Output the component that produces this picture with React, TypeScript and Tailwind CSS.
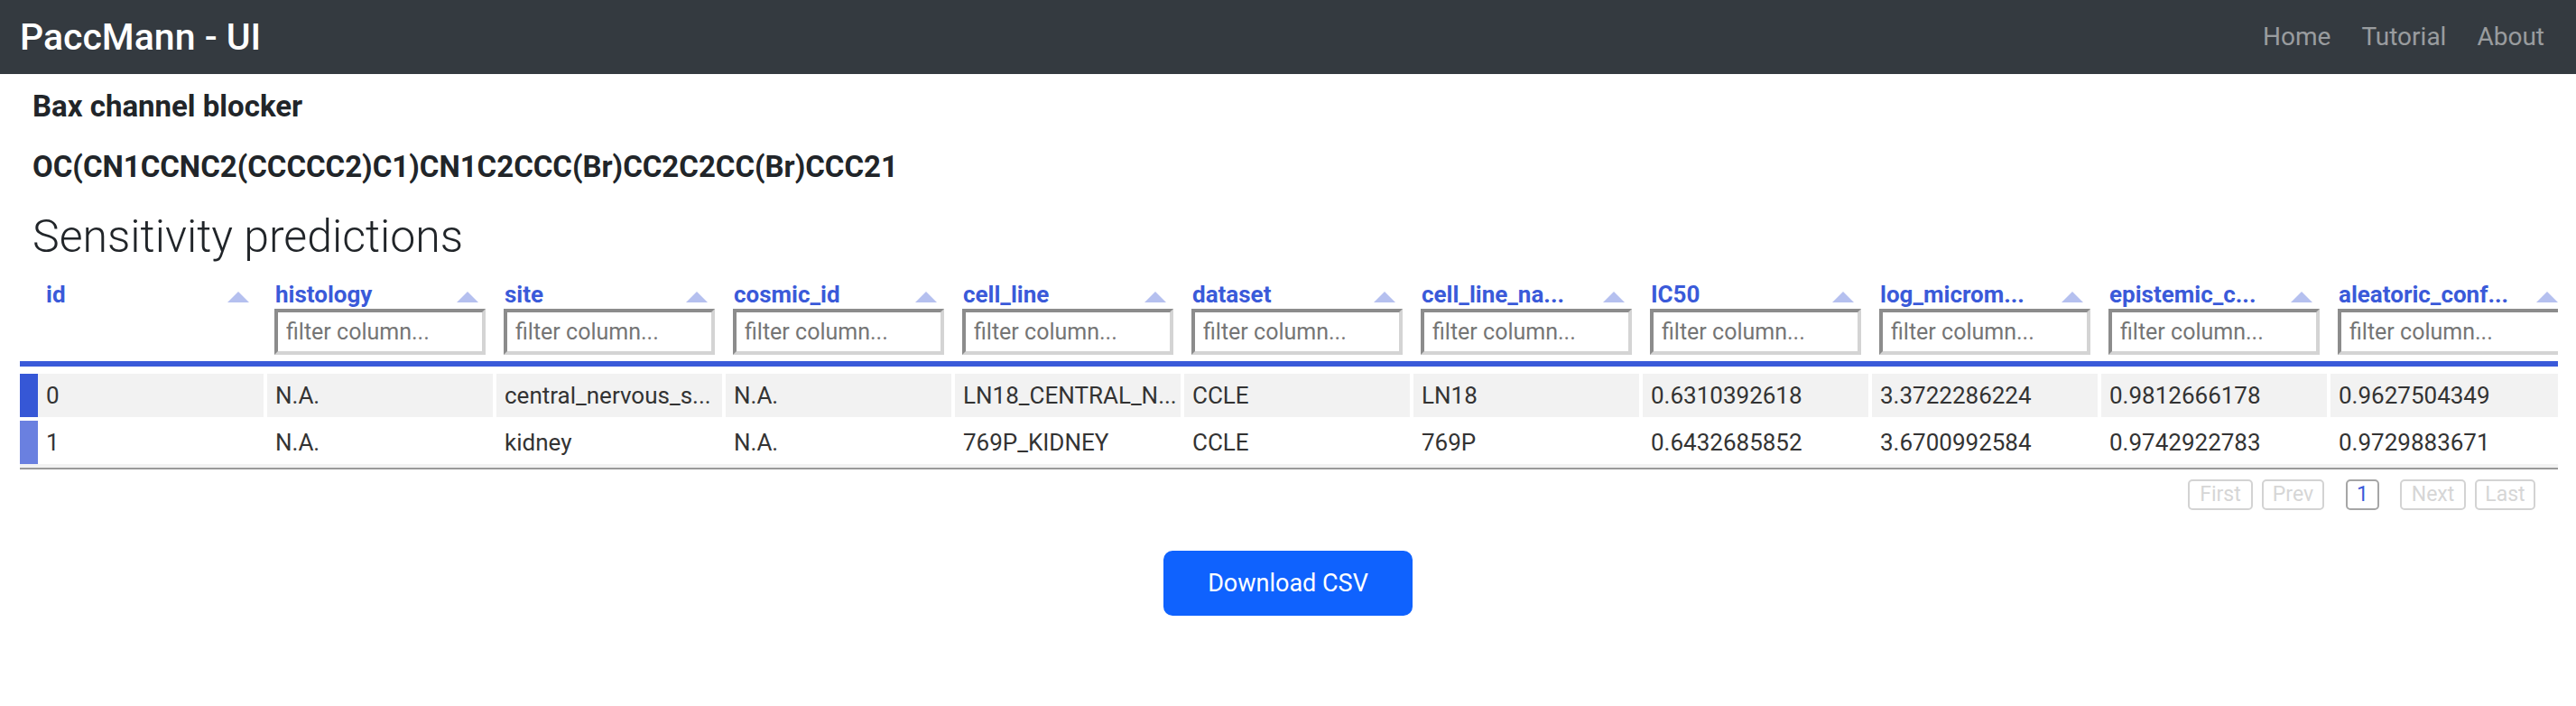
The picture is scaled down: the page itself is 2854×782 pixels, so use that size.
import React from "react";

const cols: { label: string; filter: boolean; last?: boolean }[] = [
  { label: "id", filter: false },
  { label: "histology", filter: true },
  { label: "site", filter: true },
  { label: "cosmic_id", filter: true },
  { label: "cell_line", filter: true },
  { label: "dataset", filter: true },
  { label: "cell_line_na...", filter: true },
  { label: "IC50", filter: true },
  { label: "log_microm...", filter: true },
  { label: "epistemic_c...", filter: true },
  { label: "aleatoric_conf...", filter: true, last: true },
];

const rows = [
  [
    "0",
    "N.A.",
    "central_nervous_s...",
    "N.A.",
    "LN18_CENTRAL_N...",
    "CCLE",
    "LN18",
    "0.6310392618",
    "3.3722286224",
    "0.9812666178",
    "0.9627504349",
  ],
  [
    "1",
    "N.A.",
    "kidney",
    "N.A.",
    "769P_KIDNEY",
    "CCLE",
    "769P",
    "0.6432685852",
    "3.6700992584",
    "0.9742922783",
    "0.9729883671",
  ],
];

function SortArrow() {
  return (
    <svg width="24" height="12" viewBox="0 0 24 12" className="shrink-0 mb-[7px] mr-[8px]">
      <polygon points="12,0 24,12 0,12" fill="#b5c0ef" />
    </svg>
  );
}

export default function App() {
  const font = { fontFamily: "Roboto, 'Noto Sans', sans-serif" };
  return (
    <div className="min-h-[782px] w-[2854px] bg-white text-[#212529]" style={font}>
      {/* Navbar */}
      <nav className="h-[82px] bg-[#343a40] flex items-center justify-between pl-[22px] pr-[35px]">
        <span className="text-white text-[41px] font-medium leading-none">PaccMann - UI</span>
        <div className="flex items-center gap-[34px] text-[28px] text-[rgba(255,255,255,0.5)]">
          <span>Home</span>
          <span>Tutorial</span>
          <span>About</span>
        </div>
      </nav>

      <main className="px-[22px]">
        <h5 className="pl-[14px] mt-[16px] text-[33px] font-bold leading-[40px]">Bax channel blocker</h5>
        <h5 className="pl-[14px] mt-[27px] text-[33px] font-bold leading-[40px]">
          OC(CN1CCNC2(CCCCC2)C1)CN1C2CCC(Br)CC2C2CC(Br)CCC21
        </h5>
        <h2 className="pl-[14px] mt-[28px] text-[50px] font-light leading-[58px]">Sensitivity predictions</h2>

        {/* Table */}
        <div className="mt-[19px] w-[2812px] overflow-hidden">
          {/* header */}
          <div className="flex gap-[4px] pl-[20px] pb-[7px]">
            {cols.map((c) => (
              <div
                key={c.label}
                className={`${c.last ? "w-[268px]" : "w-[250px]"} shrink-0 px-[8px]`}
              >
                <div className="flex items-end h-[32px]">
                  <span className="flex-1 min-w-0 truncate text-[26px] font-bold text-[#3a5ad9] leading-[32px] pl-[1px]">
                    {c.label}
                  </span>
                  <SortArrow />
                </div>
                <div className="h-[51px]">
                  {c.filter && (
                    <input
                      readOnly
                      placeholder="filter column..."
                      className="w-full h-[51px] border-[4px] border-solid border-t-[#8c8c8c] border-l-[#8c8c8c] border-b-[#d4d4d4] border-r-[#d4d4d4] pl-[9px] text-[25px] placeholder:text-[#757575] outline-none bg-white"
                      style={font}
                    />
                  )}
                </div>
              </div>
            ))}
          </div>
          <div className="h-[6px] bg-[#3a5ad9]" />

          {/* body */}
          <div className="mt-[8px]">
            {rows.map((r, ri) => (
              <div key={ri} className={`flex h-[48px] ${ri > 0 ? "mt-[4px]" : ""}`}>
                <div className={`w-[20px] shrink-0 ${ri === 0 ? "bg-[#3657d6]" : "bg-[#6a80e0]"}`} />
                <div className="flex gap-[4px]">
                  {r.map((v, ci) => (
                    <div
                      key={ci}
                      className={`${ci === r.length - 1 ? "w-[268px]" : "w-[250px]"} shrink-0 h-[48px] flex items-center pl-[9px] text-[26px] text-[#333] whitespace-nowrap overflow-hidden ${
                        ri === 0 ? "bg-[#f2f2f2]" : "bg-white"
                      }`}
                    >
                      {v}
                    </div>
                  ))}
                </div>
              </div>
            ))}
            <div className="h-[4px] bg-[#f2f2f2]" />
            <div className="h-[2px] bg-[#999999]" />
          </div>
        </div>

        {/* Pagination */}
        <div className="flex justify-end pr-[23px] mt-[11px] text-[23px]">
          <div className="w-[72px] h-[34px] border-2 border-[#d3d3d3] rounded-[5px] flex items-center justify-center text-[#d6d6d6]">First</div>
          <div className="ml-[10px] w-[69px] h-[34px] border-2 border-[#d3d3d3] rounded-[5px] flex items-center justify-center text-[#d6d6d6]">Prev</div>
          <div className="ml-[24px] w-[37px] h-[34px] border-2 border-[#a6a6a6] rounded-[5px] flex items-center justify-center text-[#3a5ad9]">1</div>
          <div className="ml-[23px] w-[73px] h-[34px] border-2 border-[#d3d3d3] rounded-[5px] flex items-center justify-center text-[#d6d6d6]">Next</div>
          <div className="ml-[10px] w-[67px] h-[34px] border-2 border-[#d3d3d3] rounded-[5px] flex items-center justify-center text-[#d6d6d6]">Last</div>
        </div>

        {/* Download */}
        <div className="flex justify-center mt-[45px]">
          <button className="w-[276px] h-[72px] rounded-[10px] bg-[#0f62fe] text-white text-[27px]" style={font}>
            Download CSV
          </button>
        </div>
      </main>
    </div>
  );
}
